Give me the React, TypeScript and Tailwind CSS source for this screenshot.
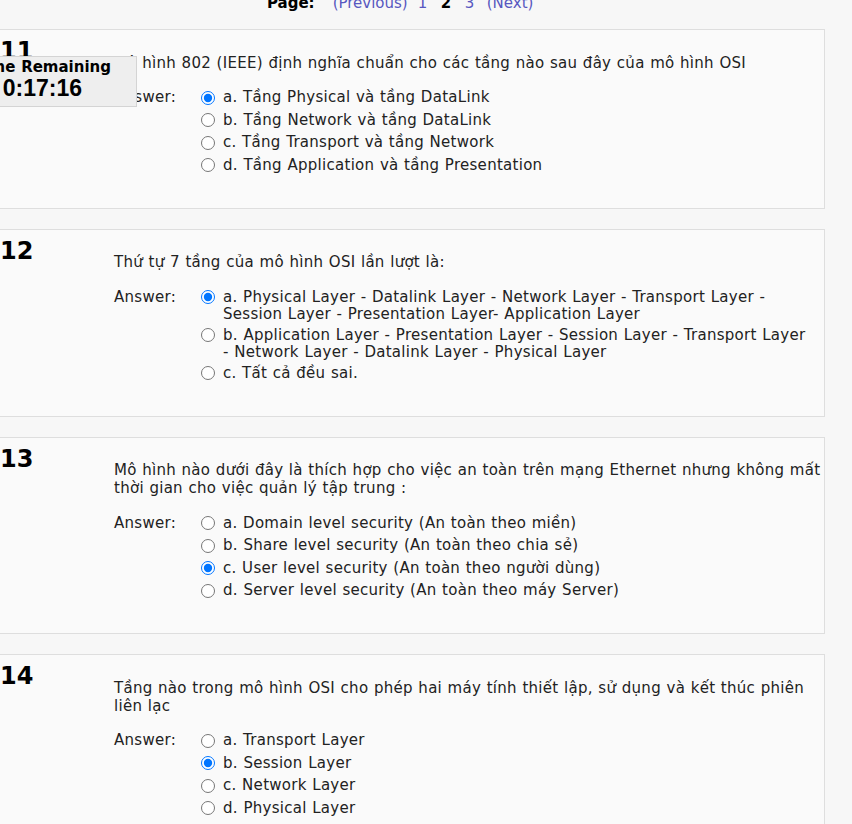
import React from "react";

type Opt = { lines: string[]; checked?: boolean };
type Q = { no: string; lines: string[]; opts: Opt[] };

const questions: Q[] = [
  {
    no: "11",
    lines: ["Mô hình 802 (IEEE) định nghĩa chuẩn cho các tầng nào sau đây của mô hình OSI"],
    opts: [
      { lines: ["a. Tầng Physical và tầng DataLink"], checked: true },
      { lines: ["b. Tầng Network và tầng DataLink"] },
      { lines: ["c. Tầng Transport và tầng Network"] },
      { lines: ["d. Tầng Application và tầng Presentation"] },
    ],
  },
  {
    no: "12",
    lines: ["Thứ tự 7 tầng của mô hình OSI lần lượt là:"],
    opts: [
      {
        lines: [
          "a. Physical Layer - Datalink Layer - Network Layer - Transport Layer -",
          "Session Layer - Presentation Layer- Application Layer",
        ],
        checked: true,
      },
      {
        lines: [
          "b. Application Layer - Presentation Layer - Session Layer - Transport Layer",
          "- Network Layer - Datalink Layer - Physical Layer",
        ],
      },
      { lines: ["c. Tất cả đều sai."] },
    ],
  },
  {
    no: "13",
    lines: [
      "Mô hình nào dưới đây là thích hợp cho việc an toàn trên mạng Ethernet nhưng không mất",
      "thời gian cho việc quản lý tập trung :",
    ],
    opts: [
      { lines: ["a. Domain level security (An toàn theo miền)"] },
      { lines: ["b. Share level security (An toàn theo chia sẻ)"] },
      { lines: ["c. User level security (An toàn theo người dùng)"], checked: true },
      { lines: ["d. Server level security (An toàn theo máy Server)"] },
    ],
  },
  {
    no: "14",
    lines: [
      "Tầng nào trong mô hình OSI cho phép hai máy tính thiết lập, sử dụng và kết thúc phiên",
      "liên lạc",
    ],
    opts: [
      { lines: ["a. Transport Layer"] },
      { lines: ["b. Session Layer"], checked: true },
      { lines: ["c. Network Layer"] },
      { lines: ["d. Physical Layer"] },
    ],
  },
];

function Card({ q }: { q: Q }) {
  return (
    <div className="flex border border-[#dedede] bg-[#fafafa] pl-[8px] pr-[4px] pb-[31px]">
      <div className="w-[114px] shrink-0 pt-[9px]">
        <div className="text-[24px] leading-[24px] font-bold text-black">{q.no}</div>
      </div>
      <div className="flex-1 pt-[23.5px] tracking-[0.28px]">
        <div className="leading-[18px] mb-[15px]">
          {q.lines.map((l, i) => (
            <div key={i} className="whitespace-nowrap">
              {l}
            </div>
          ))}
        </div>
        <div className="flex">
          <div className="w-[87px] shrink-0 pt-[2.75px] leading-[17px]">Answer:</div>
          <div className="flex flex-col">
            {q.opts.map((o, i) => (
              <div key={i} className="flex items-start pt-[2.75px] pb-[1.25px] min-h-[22.5px]">
                <div className="h-[17px] flex items-center shrink-0">
                  <input
                    type="radio"
                    name={"q" + q.no}
                    defaultChecked={!!o.checked}
                    className="w-[14px] h-[14px] m-0"
                  />
                </div>
                <div className="ml-[8px] leading-[17px]">
                  {o.lines.map((l, j) => (
                    <div key={j} className="whitespace-nowrap">
                      {l}
                    </div>
                  ))}
                </div>
              </div>
            ))}
          </div>
        </div>
      </div>
    </div>
  );
}

export default function App() {
  return (
    <div
      className="relative w-full h-[824px] overflow-hidden bg-[#f7f7f7] text-[#222] text-[15px] font-['DejaVu_Sans',sans-serif]"
      style={{ wordSpacing: "0.5px" }}
    >
      <div className="flex items-baseline h-[18px] leading-[18px] mt-[-6px] mb-[17px] pl-[267px]">
        <span className="font-bold text-black">Page:</span>
        <span className="ml-[18px] text-[#5858c0]">(Previous)</span>
        <span className="ml-[10px] text-[#5858c0]">1</span>
        <span className="ml-[13.5px] font-bold text-black">2</span>
        <span className="ml-[13.5px] text-[#5858c0]">3</span>
        <span className="ml-[12.5px] text-[#5858c0]">(Next)</span>
      </div>
      <div className="ml-[-9px] w-[834px] flex flex-col gap-[20px]">
        {questions.map((q) => (
          <Card key={q.no} q={q} />
        ))}
      </div>
      <div className="absolute left-[-64px] top-[56px] w-[201px] h-[51px] bg-[#eeeeee] border border-[#d4d4d4]">
        <div className="text-right pr-[25px] font-bold text-[15px] leading-[20px] text-black whitespace-nowrap">
          Time Remaining
        </div>
        <div className="text-right pr-[54px] mt-[-2px] font-bold text-[23px] leading-[26px] text-black font-['Liberation_Sans',sans-serif] whitespace-nowrap">
          0:17:16
        </div>
      </div>
    </div>
  );
}
